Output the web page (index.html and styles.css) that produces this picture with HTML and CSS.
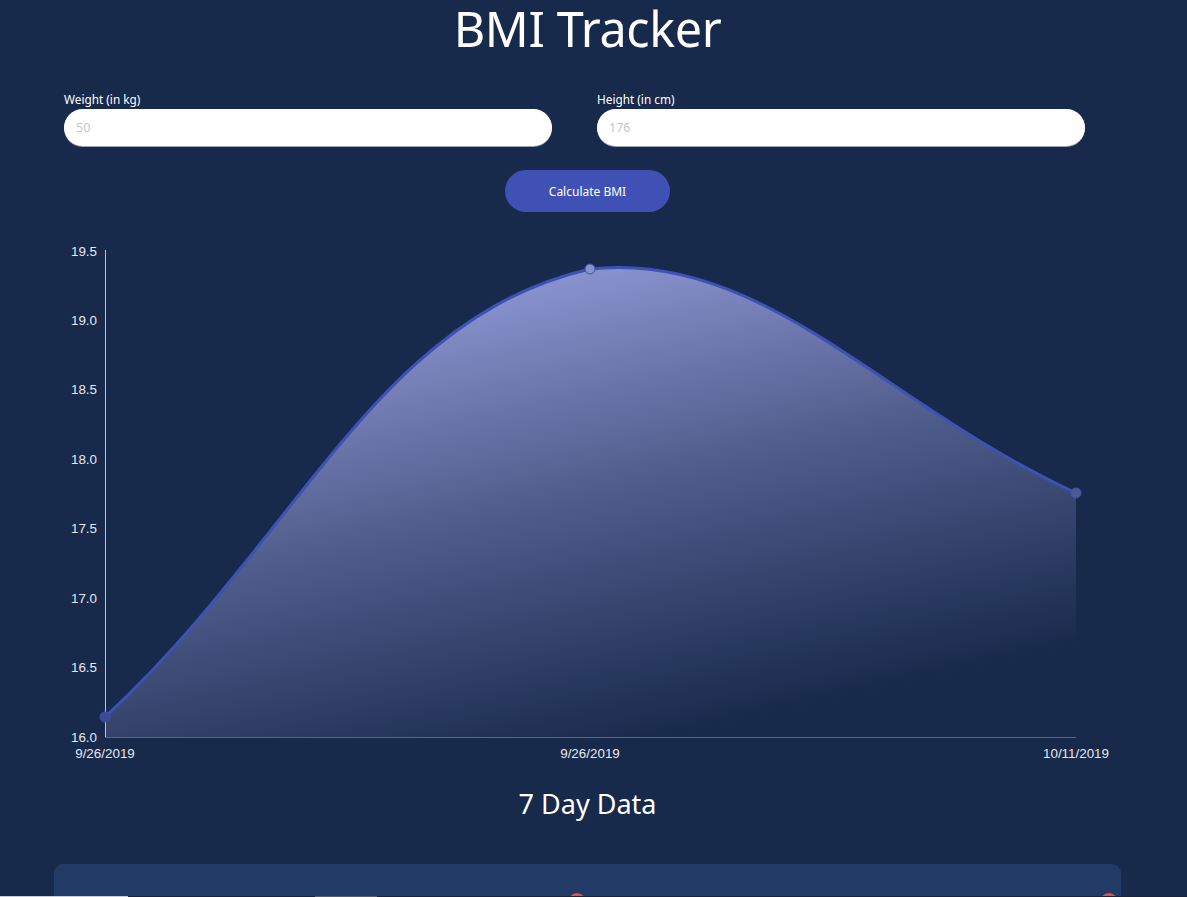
FILE: index.html
```html
<!DOCTYPE html>
<html>
<head>
<meta charset="utf-8">
<title>BMI Tracker</title>
<link rel="stylesheet" href="styles.css">
</head>
<body>
<div class="app">
  <h1 class="title">BMI Tracker</h1>
  <div class="form">
    <div class="field">
      <label class="label">Weight (in kg)</label>
      <input class="input" type="text" placeholder="50">
    </div>
    <div class="field">
      <label class="label">Height (in cm)</label>
      <input class="input" type="text" placeholder="176">
    </div>
  </div>
  <div class="actions">
    <button class="btn">Calculate BMI</button>
  </div>
  <svg class="chart" width="1187" height="525" viewBox="0 240 1187 525" xmlns="http://www.w3.org/2000/svg">
    <defs>
      <linearGradient id="fillGrad" gradientUnits="userSpaceOnUse" x1="500" y1="260" x2="610" y2="750">
        <stop offset="0" stop-color="#9099d6" stop-opacity="1"/>
        <stop offset="0.5" stop-color="#9099d6" stop-opacity="0.45"/>
        <stop offset="1" stop-color="#9099d6" stop-opacity="0"/>
      </linearGradient>
    </defs>
    <path d="M105,717 C299,538 375.5,318.5 590,269 C764,250 881.6,403.4 1076,493 L1076,737 L105,737 Z" fill="url(#fillGrad)"/>
    <line x1="105.5" y1="250" x2="105.5" y2="737" stroke="#b9c1d2" stroke-width="1"/>
    <line x1="105" y1="737.5" x2="1076" y2="737.5" stroke="#56658c" stroke-width="1"/>
    <path d="M105,717 C299,538 375.5,318.5 590,269 C764,250 881.6,403.4 1076,493" fill="none" stroke="#3f51b5" stroke-width="3"/>
    <circle cx="105" cy="717" r="5" fill="#3a4a8e" stroke="#3f51b5" stroke-width="1"/>
    <circle cx="590" cy="269" r="5" fill="#8592cc" stroke="#3f51b5" stroke-width="1"/>
    <circle cx="1076" cy="493" r="5" fill="#4d5a92" stroke="#3f51b5" stroke-width="1"/>
    <g class="ylab" text-anchor="end">
      <text x="97" y="256">19.5</text>
      <text x="97" y="325">19.0</text>
      <text x="97" y="394">18.5</text>
      <text x="97" y="464">18.0</text>
      <text x="97" y="533">17.5</text>
      <text x="97" y="603">17.0</text>
      <text x="97" y="672">16.5</text>
      <text x="97" y="742">16.0</text>
    </g>
    <g class="xlab" text-anchor="middle">
      <text x="105" y="758">9/26/2019</text>
      <text x="590" y="758">9/26/2019</text>
      <text x="1076" y="758">10/11/2019</text>
    </g>
  </svg>
  <h2 class="subtitle">7 Day Data</h2>
  <div class="card">
    <div class="entry"><span class="del"></span></div>
    <div class="entry entry-right"><span class="del"></span></div>
  </div>
</div>
<div class="edge"></div>
</body>
</html>
```
FILE: styles.css
```css
html, body {
  margin: 0;
  padding: 0;
  background: #182a4c;
  overflow: hidden;
}
body {
  font-family: "Noto Sans", "Open Sans", sans-serif;
  color: #ffffff;
  height: 897px;
}
.app {
  display: flex;
  flex-direction: column;
  padding-top: 6px;
}
.title {
  margin: 0;
  text-align: center;
  font-weight: 400;
  font-size: 48.5px;
  line-height: 66px;
  letter-spacing: -0.4px;
  height: 50px;
  overflow: visible;
  transform: translateY(-11px);
  padding-right: 12px;
}
.form {
  display: flex;
  gap: 45px;
  margin: 36px 0 0 64px;
}
.field {
  display: flex;
  flex-direction: column;
  width: 488px;
}
.label {
  font-size: 11.8px;
  line-height: 14px;
  margin-bottom: 3px;
}
.input {
  box-sizing: border-box;
  height: 37px;
  border: none;
  border-radius: 19px;
  background: #ffffff;
  box-shadow: 0 1px 0 #9aa3b5;
  padding: 0 12px;
  font-family: "Noto Sans", sans-serif;
  font-size: 12.5px;
  outline: none;
}
.input::placeholder {
  color: #c6c6c6;
}
.actions {
  display: flex;
  justify-content: center;
  margin-top: 24px;
  padding-right: 12px;
}
.btn {
  width: 165px;
  height: 42px;
  border: none;
  border-radius: 21px;
  background: #3f51b5;
  color: #ffffff;
  font-family: "Noto Sans", sans-serif;
  font-size: 12px;
}
.chart {
  display: block;
  margin-top: 28px;
}
.chart text {
  font-family: "Liberation Sans", Arial, sans-serif;
  font-size: 13.4px;
  fill: #e6e8ee;
}
.subtitle {
  margin: 21px 0 0;
  text-align: center;
  font-weight: 400;
  font-size: 27px;
  line-height: 36px;
  padding-right: 12px;
}
.card {
  margin: 42px 0 0 54px;
  width: 1067px;
  height: 120px;
  background: #213a66;
  border-radius: 9px;
  display: grid;
  grid-template-columns: 533px 534px;
}
.entry {
  display: flex;
  justify-content: flex-end;
  align-items: flex-start;
  padding: 29px 1px 0 0;
}
.entry-right {
  padding-right: 3px;
}
.del {
  display: block;
  width: 18px;
  height: 18px;
  border-radius: 50%;
  background: #e0524c;
}
.edge {
  position: fixed;
  left: 0;
  right: 0;
  bottom: 0;
  height: 1px;
  background: linear-gradient(to right, #c8ccd4 0 128px, #1c2336 128px 315px, #5a5e68 315px 377px, #1c2336 377px);
}
```
